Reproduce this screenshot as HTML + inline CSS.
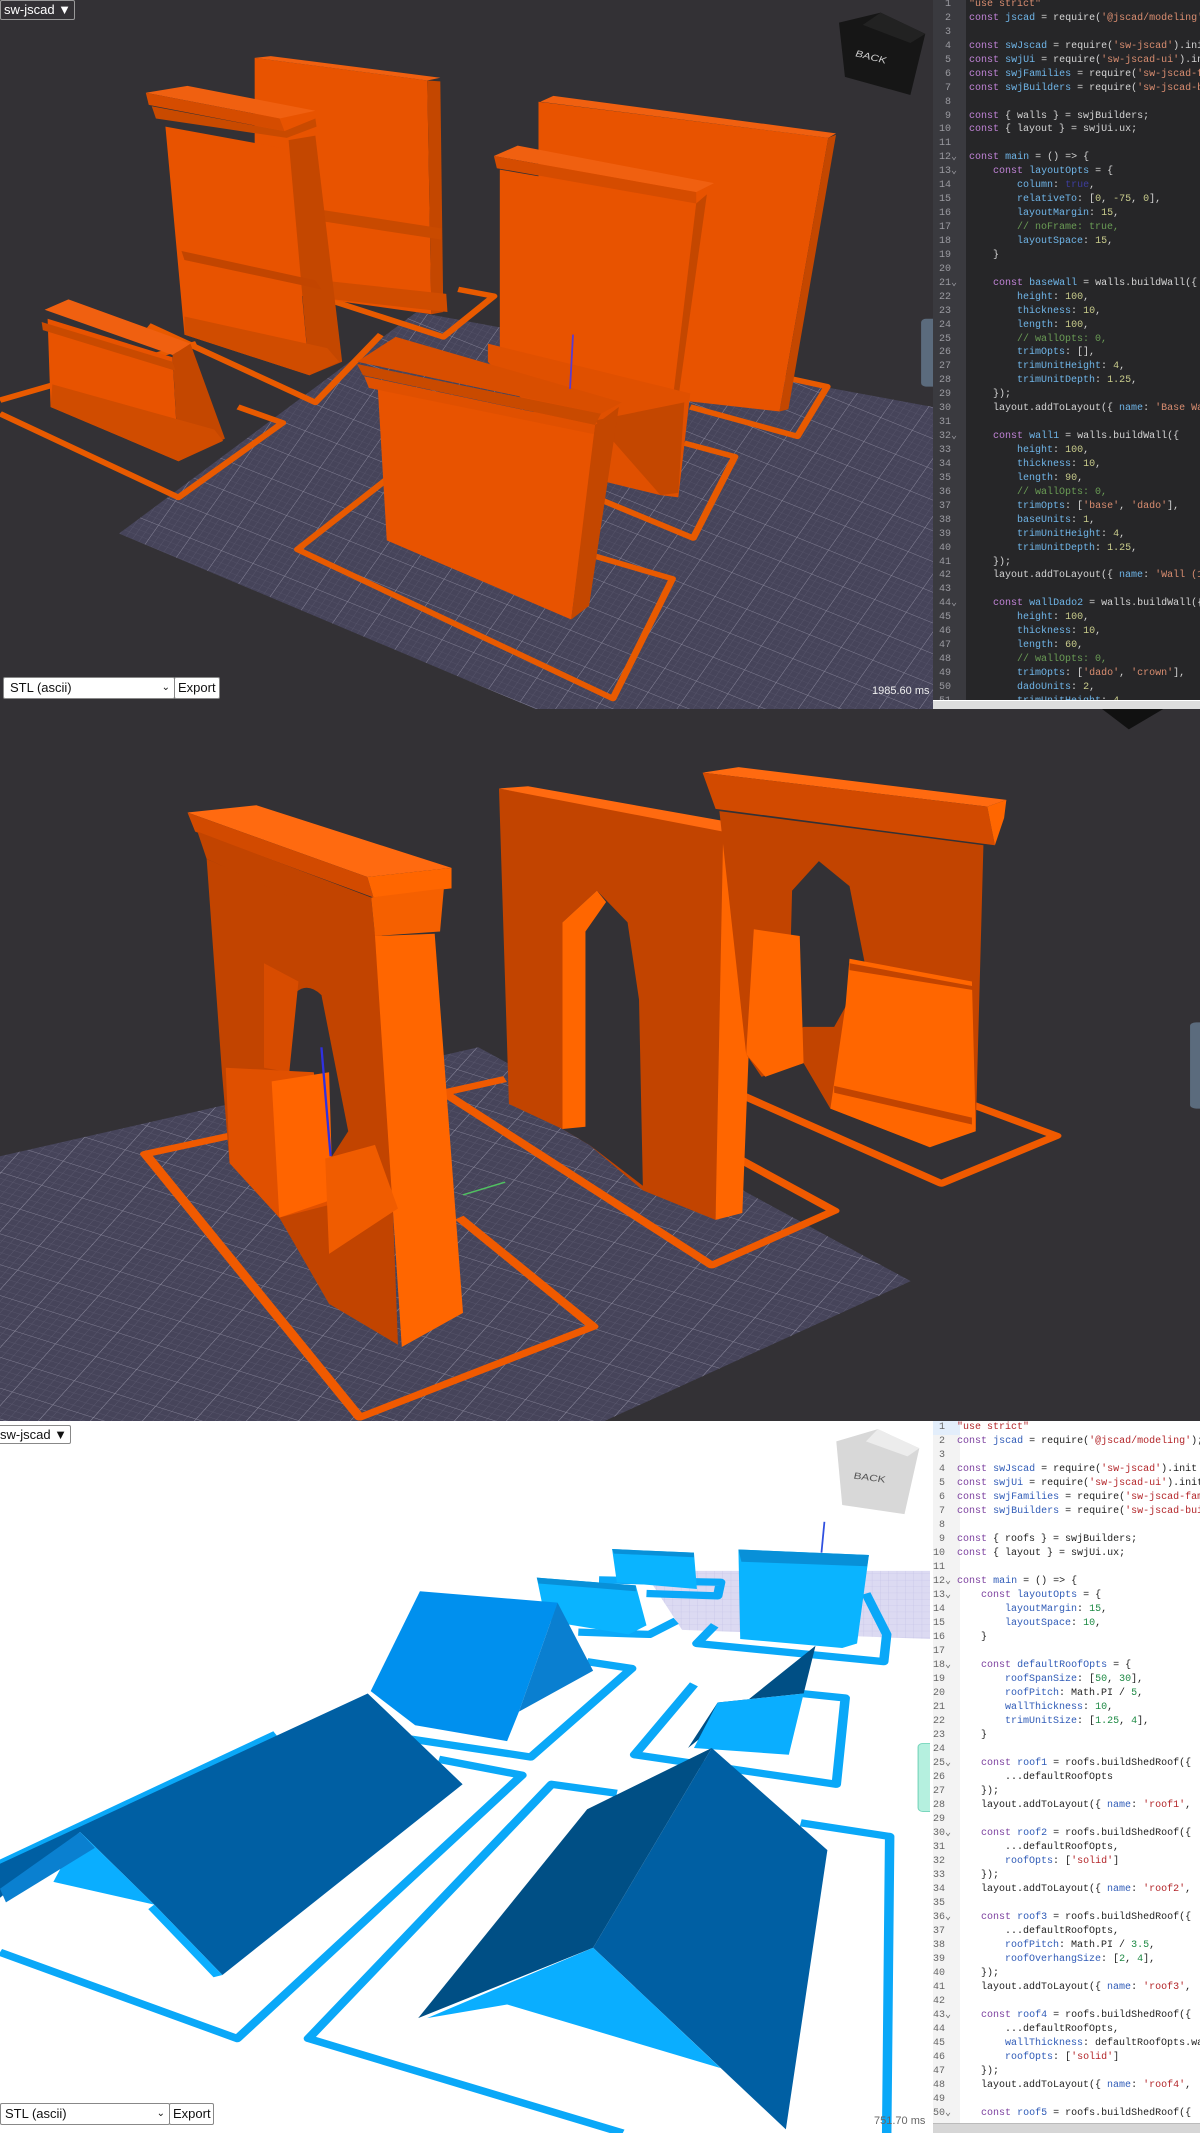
<!DOCTYPE html>
<html><head><meta charset="utf-8">
<style>
*{margin:0;padding:0;box-sizing:border-box}
html,body{width:1200px;height:2133px;overflow:hidden;background:#333135;font-family:"Liberation Sans",sans-serif}
.panel{position:absolute;left:0;overflow:hidden}
.svg{position:absolute;left:0;top:0}
.code{position:absolute;overflow:hidden;font-family:"Liberation Mono",monospace;font-size:10px}
.code .ln{position:absolute;left:0;top:0;width:100%;}
.dark{background:#262628;color:#d4d4d4}
.dark .g{position:absolute;left:0;top:0;bottom:0;width:33px;background:#3a3a3f}
.dark .num{color:#9a9aa0}
.dark .k{color:#c083d6}.dark .v{color:#6fb5e8}.dark .s{color:#d98d70}.dark .n{color:#c9cc8c}.dark .c{color:#6a9c55}.dark .t{color:#3d3d9c}
.light{background:#fff;color:#222}
.light .g{position:absolute;left:0;top:0;bottom:0;width:27px;background:#f3f3f3}
.light .num{color:#666}
.light .k{color:#7b3f9e}.light .v{color:#2f5bb7}.light .s{color:#b3262a}.light .n{color:#1d8a44}.light .c{color:#888}
.row{height:14px;line-height:14px;position:relative;white-space:pre;overflow:hidden}
.dark .row{height:13.94px;line-height:13.94px}
.btn{position:absolute;background:#fff;border:1px solid #888;border-radius:2px;font-size:12px;color:#111;line-height:16px;padding:0 3px;white-space:nowrap}
</style></head><body>

<!-- PANEL 1 -->
<div class="panel" style="top:0;width:1200px;height:709px;background:#333135">
<svg class="svg" width="933" height="709" viewBox="0 0 1568 1568" preserveAspectRatio="none">
<defs>
<pattern id="gr" width="12" height="12" patternUnits="userSpaceOnUse" patternTransform="rotate(28)">
<rect width="12" height="12" fill="#46445a"/><path d="M0 0H12M0 0V12" stroke="#5c5a70" stroke-width="1.2"/></pattern>
<pattern id="gr2" width="60" height="60" patternUnits="userSpaceOnUse" patternTransform="rotate(28)">
<path d="M0 0H60M0 0V60" stroke="#8e8ca0" stroke-width="1.5" fill="none"/></pattern>
</defs>
<polygon points="200,1180 700,690 1568,900 1568,1568 900,1568" fill="url(#gr)"/>
<polygon points="200,1180 700,690 1568,900 1568,1568 900,1568" fill="url(#gr2)"/>
<g fill="none" stroke="#e85a00" stroke-width="12" stroke-linejoin="round">
<polyline points="0,885 330,760"/><polyline points="0,915 300,1100 475,935 400,900"/>
<polyline points="250,720 530,890 640,740"/>
<polyline points="545,660 745,745 830,655 770,640"/>
<polyline points="650,1060 500,1215 1030,1545 1130,1280 1000,1230"/>
<polyline points="1000,1100 1165,1190 1235,1010 1150,980"/>
<polyline points="1160,900 1340,965 1390,855 1320,835"/>
</g>
<polygon points="428,128 718,178 725,695 428,640" fill="#e85300"/>
<polygon points="718,178 740,180 745,690 725,695" fill="#c44700"/>
<polygon points="428,128 455,124 740,172 718,178" fill="#f06010"/>
<polygon points="520,460 742,505 742,530 520,485" fill="#c94a00"/>
<polygon points="540,620 750,650 752,690 545,660" fill="#d04c00"/>
<polygon points="278,280 485,330 520,830 310,740" fill="#e85300"/>
<polygon points="485,310 530,300 575,800 520,830" fill="#c44700"/>
<polygon points="245,205 315,190 530,245 470,262" fill="#f06010"/>
<polygon points="245,205 470,262 478,290 250,232" fill="#d54c00"/>
<polygon points="255,235 478,290 530,262 532,280 482,305 262,262" fill="#c94a00"/>
<polygon points="305,555 530,620 540,640 310,575" fill="#c24500"/>
<polygon points="310,700 550,770 570,800 520,830 310,740" fill="#d04c00"/>
<polygon points="80,705 290,790 300,1020 85,900" fill="#e85300"/>
<polygon points="290,785 320,760 378,970 300,1020" fill="#c44700"/>
<polygon points="75,685 115,662 320,760 290,785" fill="#f06010"/>
<polygon points="70,712 290,800 295,820 72,730" fill="#c94a00"/>
<polygon points="88,850 360,950 375,975 300,1020 85,900" fill="#d04c00"/>
<polygon points="905,225 1392,305 1310,910 905,850" fill="#e85300"/>
<polygon points="1392,305 1405,298 1325,905 1310,910" fill="#c44700"/>
<polygon points="908,225 930,212 1405,295 1392,305" fill="#f06010"/>
<polygon points="840,375 1170,450 1130,890 840,800" fill="#e85300"/>
<polygon points="1170,450 1188,430 1140,880 1130,890" fill="#c44700"/>
<polygon points="830,345 870,322 1200,405 1170,425" fill="#f06010"/>
<polygon points="830,345 1170,425 1170,450 835,372" fill="#d54c00"/>
<polygon points="820,760 1160,870 1140,1100 1110,1095 1000,1060 820,800" fill="#e05000"/>
<polygon points="1000,930 1150,890 1140,1090 1110,1095" fill="#c44700"/>
<polygon points="635,860 1000,960 960,1370 650,1195" fill="#e85300"/>
<polygon points="1000,940 1040,900 990,1340 960,1370" fill="#c44700"/>
<polygon points="600,800 665,745 1045,890 1010,915" fill="#d94e00"/>
<polygon points="600,805 1010,915 1000,940 610,830" fill="#c94a00"/>
<polygon points="612,832 1000,940 998,960 620,858" fill="#e05000"/>
<line x1="963" y1="740" x2="958" y2="860" stroke="#5a3ad0" stroke-width="3"/>
<polygon points="1410,50 1480,28 1555,75 1530,210 1420,170" fill="#161616"/>
<polygon points="1480,28 1555,75 1530,95 1450,55" fill="#222"/>
<text x="1435" y="130" fill="#ccc" font-size="20" transform="rotate(18 1455 130)">BACK</text>
<rect x="1548" y="705" width="30" height="150" rx="8" fill="#5b6b7d"/>
</svg>
<div class="btn" style="left:0;top:0;height:20px;font-size:13px;line-height:18px;background:#333135;color:#fff;border-color:#999">sw-jscad ▼</div>
<div class="btn" style="left:3px;top:677px;width:172px;height:22px;line-height:20px;font-size:13px;padding-left:6px">STL (ascii)<span style="position:absolute;right:4px;font-size:10px">⌄</span></div>
<div class="btn" style="left:174px;top:677px;width:46px;height:22px;line-height:20px;font-size:13px">Export</div>
<div style="position:absolute;left:872px;top:685px;color:#eee;font-size:11px">1985.60 ms</div>

<div class="code dark" style="left:933px;top:0;width:267px;height:700px">
<div class="g"></div>
<div class="ln" style="top:-2px">
<div class="row"><span class="num">  1 </span>  <span class="s">"use strict"</span></div>
<div class="row"><span class="num">  2 </span>  <span class="k">const</span> <span class="v">jscad</span> = require(<span class="s">'@jscad/modeling'</span>);</div>
<div class="row"><span class="num">  3 </span></div>
<div class="row"><span class="num">  4 </span>  <span class="k">const</span> <span class="v">swJscad</span> = require(<span class="s">'sw-jscad'</span>).init</div>
<div class="row"><span class="num">  5 </span>  <span class="k">const</span> <span class="v">swjUi</span> = require(<span class="s">'sw-jscad-ui'</span>).init</div>
<div class="row"><span class="num">  6 </span>  <span class="k">const</span> <span class="v">swjFamilies</span> = require(<span class="s">'sw-jscad-families'</span></div>
<div class="row"><span class="num">  7 </span>  <span class="k">const</span> <span class="v">swjBuilders</span> = require(<span class="s">'sw-jscad-builders'</span></div>
<div class="row"><span class="num">  8 </span></div>
<div class="row"><span class="num">  9 </span>  <span class="k">const</span> { walls } = swjBuilders;</div>
<div class="row"><span class="num"> 10 </span>  <span class="k">const</span> { layout } = swjUi.ux;</div>
<div class="row"><span class="num"> 11 </span></div>
<div class="row"><span class="num"> 12⌄</span>  <span class="k">const</span> <span class="v">main</span> = () =&gt; {</div>
<div class="row"><span class="num"> 13⌄</span>      <span class="k">const</span> <span class="v">layoutOpts</span> = {</div>
<div class="row"><span class="num"> 14 </span>          <span class="v">column</span>: <span class="t">true</span>,</div>
<div class="row"><span class="num"> 15 </span>          <span class="v">relativeTo</span>: [<span class="n">0</span>, <span class="n">-75</span>, <span class="n">0</span>],</div>
<div class="row"><span class="num"> 16 </span>          <span class="v">layoutMargin</span>: <span class="n">15</span>,</div>
<div class="row"><span class="num"> 17 </span>          <span class="c">// noFrame: true,</span></div>
<div class="row"><span class="num"> 18 </span>          <span class="v">layoutSpace</span>: <span class="n">15</span>,</div>
<div class="row"><span class="num"> 19 </span>      }</div>
<div class="row"><span class="num"> 20 </span></div>
<div class="row"><span class="num"> 21⌄</span>      <span class="k">const</span> <span class="v">baseWall</span> = walls.buildWall({</div>
<div class="row"><span class="num"> 22 </span>          <span class="v">height</span>: <span class="n">100</span>,</div>
<div class="row"><span class="num"> 23 </span>          <span class="v">thickness</span>: <span class="n">10</span>,</div>
<div class="row"><span class="num"> 24 </span>          <span class="v">length</span>: <span class="n">100</span>,</div>
<div class="row"><span class="num"> 25 </span>          <span class="c">// wallOpts: 0,</span></div>
<div class="row"><span class="num"> 26 </span>          <span class="v">trimOpts</span>: [],</div>
<div class="row"><span class="num"> 27 </span>          <span class="v">trimUnitHeight</span>: <span class="n">4</span>,</div>
<div class="row"><span class="num"> 28 </span>          <span class="v">trimUnitDepth</span>: <span class="n">1.25</span>,</div>
<div class="row"><span class="num"> 29 </span>      });</div>
<div class="row"><span class="num"> 30 </span>      layout.addToLayout({ <span class="v">name</span>: <span class="s">'Base Wall'</span></div>
<div class="row"><span class="num"> 31 </span></div>
<div class="row"><span class="num"> 32⌄</span>      <span class="k">const</span> <span class="v">wall1</span> = walls.buildWall({</div>
<div class="row"><span class="num"> 33 </span>          <span class="v">height</span>: <span class="n">100</span>,</div>
<div class="row"><span class="num"> 34 </span>          <span class="v">thickness</span>: <span class="n">10</span>,</div>
<div class="row"><span class="num"> 35 </span>          <span class="v">length</span>: <span class="n">90</span>,</div>
<div class="row"><span class="num"> 36 </span>          <span class="c">// wallOpts: 0,</span></div>
<div class="row"><span class="num"> 37 </span>          <span class="v">trimOpts</span>: [<span class="s">'base'</span>, <span class="s">'dado'</span>],</div>
<div class="row"><span class="num"> 38 </span>          <span class="v">baseUnits</span>: <span class="n">1</span>,</div>
<div class="row"><span class="num"> 39 </span>          <span class="v">trimUnitHeight</span>: <span class="n">4</span>,</div>
<div class="row"><span class="num"> 40 </span>          <span class="v">trimUnitDepth</span>: <span class="n">1.25</span>,</div>
<div class="row"><span class="num"> 41 </span>      });</div>
<div class="row"><span class="num"> 42 </span>      layout.addToLayout({ <span class="v">name</span>: <span class="s">'Wall (1)'</span></div>
<div class="row"><span class="num"> 43 </span></div>
<div class="row"><span class="num"> 44⌄</span>      <span class="k">const</span> <span class="v">wallDado2</span> = walls.buildWall({</div>
<div class="row"><span class="num"> 45 </span>          <span class="v">height</span>: <span class="n">100</span>,</div>
<div class="row"><span class="num"> 46 </span>          <span class="v">thickness</span>: <span class="n">10</span>,</div>
<div class="row"><span class="num"> 47 </span>          <span class="v">length</span>: <span class="n">60</span>,</div>
<div class="row"><span class="num"> 48 </span>          <span class="c">// wallOpts: 0,</span></div>
<div class="row"><span class="num"> 49 </span>          <span class="v">trimOpts</span>: [<span class="s">'dado'</span>, <span class="s">'crown'</span>],</div>
<div class="row"><span class="num"> 50 </span>          <span class="v">dadoUnits</span>: <span class="n">2</span>,</div>
<div class="row"><span class="num"> 51 </span>          <span class="v">trimUnitHeight</span>: <span class="n">4</span>,</div>
</div>
</div>
<div style="position:absolute;left:933px;top:700px;width:267px;height:9px;background:#ddd;border-top:1px solid #fff"></div>
</div>

<!-- PANEL 2 -->
<div class="panel" style="top:709px;width:1200px;height:712px;background:#333135">
<svg class="svg" width="1200" height="712" viewBox="0 0 1568 1568" preserveAspectRatio="none">
<polygon points="0,985 625,745 1190,1260 790,1568 0,1568" fill="url(#gr)"/>
<polygon points="0,985 625,745 1190,1260 790,1568 0,1568" fill="url(#gr2)"/>
<polygon points="1440,0 1520,0 1475,45" fill="#111"/>
<g fill="none" stroke="#f05a00" stroke-width="14" stroke-linejoin="round">
<polyline points="300,940 190,980 470,1560 775,1360 600,1120"/>
<polyline points="660,815 580,845 930,1225 1090,1105 780,820"/>
<polyline points="880,725 815,735 1230,1045 1380,940 1045,730"/>
</g>
<path d="M270,330 L500,500 L520,1400 L430,1310 L365,1120 L300,1000 L290,800 Z" fill="#c24400"/>
<path d="M370,800 L375,650 Q395,590 420,630 L455,930 L432,990 L395,980 Z" fill="#333135"/>
<polygon points="345,560 390,600 378,800 345,790" fill="#d84c00"/>
<polygon points="295,790 410,800 435,1090 365,1120 300,1000" fill="#e05000"/>
<polygon points="355,820 430,800 435,1080 365,1120" fill="#ff6400"/>
<polygon points="490,500 568,495 605,1330 525,1405" fill="#ff6600"/>
<polygon points="425,990 490,960 520,1100 430,1200" fill="#f05c00"/>
<polygon points="245,228 335,212 590,350 480,370" fill="#ff6a10"/>
<polygon points="245,228 480,370 488,415 255,270" fill="#d24a00"/>
<polygon points="480,370 590,350 590,395 488,415" fill="#ff6600"/>
<polygon points="258,270 485,415 490,500 270,330" fill="#c24400"/>
<polygon points="485,415 580,395 575,490 490,500" fill="#f56000"/>
<polygon points="652,175 950,265 935,1125 840,1060 770,960 735,925 665,870" fill="#c24400"/>
<polygon points="735,925 735,470 780,400 820,470 835,640 840,1050 770,960" fill="#333135"/>
<polygon points="735,470 780,400 792,425 765,490 765,920 735,925" fill="#ff6600"/>
<polygon points="945,270 990,260 970,1110 935,1125" fill="#ff6600"/>
<polygon points="652,175 690,170 990,260 945,270" fill="#ff6a10"/>
<polygon points="940,225 1285,300 1275,925 1215,965 1085,880 1050,780 995,810 975,760" fill="#c24400"/>
<polygon points="1030,720 1035,400 1070,335 1110,390 1130,560 1110,640 1090,700 1050,700" fill="#333135"/>
<polygon points="985,485 1045,500 1050,780 1000,810 975,760" fill="#ff6600"/>
<polygon points="1110,550 1270,600 1275,930 1215,965 1085,880 1105,650" fill="#ff6600"/>
<polygon points="1110,560 1270,610 1275,620 1110,575" fill="#c24400"/>
<polygon points="1090,830 1270,900 1270,915 1090,845" fill="#c24400"/>
<polygon points="918,140 965,128 1315,200 1290,215" fill="#ff6a10"/>
<polygon points="918,140 1290,215 1300,300 935,220" fill="#d24a00"/>
<polygon points="1290,215 1315,200 1312,240 1300,300" fill="#ff6600"/>
<line x1="420" y1="745" x2="432" y2="985" stroke="#3030e0" stroke-width="3"/>
<line x1="605" y1="1070" x2="660" y2="1042" stroke="#50c060" stroke-width="3"/>
<rect x="1555" y="690" width="30" height="190" rx="8" fill="#5b6b7d"/>
</svg>
</div>

<!-- PANEL 3 -->
<div class="panel" style="top:1421px;width:1200px;height:712px;background:#fff">
<svg class="svg" width="930" height="712" viewBox="0 0 1568 1568" preserveAspectRatio="none">
<defs><pattern id="lg" width="14" height="14" patternUnits="userSpaceOnUse"><rect width="14" height="14" fill="#dcdaf2"/><path d="M0 0H14M0 0V14" stroke="#c2c0e6" stroke-width="1"/></pattern></defs>
<polygon points="1085,330 1568,330 1568,480 1150,460" fill="url(#lg)"/>
<g fill="none" stroke="#0aa8f8" stroke-width="16" stroke-linejoin="round">
<polyline points="0,1170 400,1360 880,780 740,745"/>
<polyline points="0,975 465,690"/>
<polyline points="690,700 895,740 1065,545 990,530"/>
<polyline points="975,465 1095,470 1140,440"/>
<polyline points="1010,350 1215,355 1210,385 1090,380"/>
<polyline points="1205,450 1175,490 1490,530 1495,470 1460,380"/>
<polyline points="1170,580 1070,735 1410,800 1425,610 1350,600"/>
<polyline points="1040,820 930,800 520,1360 1050,1568"/>
<polyline points="1350,885 1500,915 1495,1568"/>
</g>
<polygon points="1032,282 1170,290 1175,370 1040,355" fill="#0ab4ff"/>
<polygon points="1032,282 1170,290 1170,300 1035,292" fill="#0890d8"/>
<polygon points="905,345 1072,362 1090,450 1060,470 920,440" fill="#0ab4ff"/>
<polygon points="905,345 1072,362 1072,375 908,358" fill="#0890d8"/>
<polygon points="1245,283 1465,295 1445,490 1420,500 1248,480" fill="#0ab4ff"/>
<polygon points="1245,283 1465,295 1462,320 1250,310" fill="#0890d8"/>
<polygon points="708,375 940,400 875,640 855,705 700,670 625,595" fill="#0090ee"/>
<polygon points="940,400 1000,550 875,640" fill="#0a7fd0"/>
<polygon points="0,975 620,600 780,800 375,1220 260,1065 135,905 0,1050" fill="#005fa3"/>
<polygon points="135,905 260,1065 90,1015" fill="#0aaeff"/>
<polygon points="0,1030 135,905 160,940 10,1060" fill="#0a80d0"/>
<polygon points="260,1065 375,1220 360,1225 250,1075" fill="#0aaeff"/>
<polygon points="1160,720 1375,495 1355,600 1210,620" fill="#004f85"/>
<polygon points="1210,620 1355,600 1330,735 1170,720" fill="#0aaeff"/>
<polygon points="990,855 1200,720 1000,1160 705,1315" fill="#004f85"/>
<polygon points="1200,720 1395,945 1325,1560 1000,1160" fill="#005fa3"/>
<polygon points="720,1315 1000,1160 1215,1425 855,1285" fill="#0aaeff"/>
<line x1="1390" y1="222" x2="1385" y2="290" stroke="#3050e0" stroke-width="3"/>
<polygon points="1410,45 1480,18 1550,60 1525,205 1420,185" fill="#d8d8d8"/>
<polygon points="1480,18 1550,60 1530,78 1460,45" fill="#ececec"/>
<text x="1438" y="130" fill="#555" font-size="20" transform="rotate(10 1458 130)">BACK</text>
<rect x="1548" y="710" width="30" height="150" rx="8" fill="#b5f0df" stroke="#7ad6bd" stroke-width="2"/>
</svg>
<div class="btn" style="left:-4px;top:4px;height:19px;font-size:13px;line-height:17px">sw-jscad ▼</div>
<div class="btn" style="left:0;top:682px;width:170px;height:22px;line-height:20px;font-size:13px;padding-left:4px">STL (ascii)<span style="position:absolute;right:4px;font-size:10px">⌄</span></div>
<div class="btn" style="left:169px;top:682px;width:45px;height:22px;line-height:20px;font-size:13px">Export</div>
<div style="position:absolute;left:874px;top:694px;color:#666;font-size:11px">751.70 ms</div>

<div class="code light" style="left:933px;top:0;width:267px;height:702px">
<div class="g"></div>
<div style="position:absolute;left:0;top:0;width:27px;height:14px;background:#e3eefb"></div>
<div class="ln" style="top:0">
<div class="row"><span class="num"> 1 </span> <span class="s">"use strict"</span></div>
<div class="row"><span class="num"> 2 </span> <span class="k">const</span> <span class="v">jscad</span> = require(<span class="s">'@jscad/modeling'</span>);</div>
<div class="row"><span class="num"> 3 </span></div>
<div class="row"><span class="num"> 4 </span> <span class="k">const</span> <span class="v">swJscad</span> = require(<span class="s">'sw-jscad'</span>).init</div>
<div class="row"><span class="num"> 5 </span> <span class="k">const</span> <span class="v">swjUi</span> = require(<span class="s">'sw-jscad-ui'</span>).init</div>
<div class="row"><span class="num"> 6 </span> <span class="k">const</span> <span class="v">swjFamilies</span> = require(<span class="s">'sw-jscad-families'</span></div>
<div class="row"><span class="num"> 7 </span> <span class="k">const</span> <span class="v">swjBuilders</span> = require(<span class="s">'sw-jscad-builders'</span></div>
<div class="row"><span class="num"> 8 </span></div>
<div class="row"><span class="num"> 9 </span> <span class="k">const</span> { roofs } = swjBuilders;</div>
<div class="row"><span class="num">10 </span> <span class="k">const</span> { layout } = swjUi.ux;</div>
<div class="row"><span class="num">11 </span></div>
<div class="row"><span class="num">12⌄</span> <span class="k">const</span> <span class="v">main</span> = () =&gt; {</div>
<div class="row"><span class="num">13⌄</span>     <span class="k">const</span> <span class="v">layoutOpts</span> = {</div>
<div class="row"><span class="num">14 </span>         <span class="v">layoutMargin</span>: <span class="n">15</span>,</div>
<div class="row"><span class="num">15 </span>         <span class="v">layoutSpace</span>: <span class="n">10</span>,</div>
<div class="row"><span class="num">16 </span>     }</div>
<div class="row"><span class="num">17 </span></div>
<div class="row"><span class="num">18⌄</span>     <span class="k">const</span> <span class="v">defaultRoofOpts</span> = {</div>
<div class="row"><span class="num">19 </span>         <span class="v">roofSpanSize</span>: [<span class="n">50</span>, <span class="n">30</span>],</div>
<div class="row"><span class="num">20 </span>         <span class="v">roofPitch</span>: Math.PI / <span class="n">5</span>,</div>
<div class="row"><span class="num">21 </span>         <span class="v">wallThickness</span>: <span class="n">10</span>,</div>
<div class="row"><span class="num">22 </span>         <span class="v">trimUnitSize</span>: [<span class="n">1.25</span>, <span class="n">4</span>],</div>
<div class="row"><span class="num">23 </span>     }</div>
<div class="row"><span class="num">24 </span></div>
<div class="row"><span class="num">25⌄</span>     <span class="k">const</span> <span class="v">roof1</span> = roofs.buildShedRoof({</div>
<div class="row"><span class="num">26 </span>         ...defaultRoofOpts</div>
<div class="row"><span class="num">27 </span>     });</div>
<div class="row"><span class="num">28 </span>     layout.addToLayout({ <span class="v">name</span>: <span class="s">'roof1'</span>, </div>
<div class="row"><span class="num">29 </span></div>
<div class="row"><span class="num">30⌄</span>     <span class="k">const</span> <span class="v">roof2</span> = roofs.buildShedRoof({</div>
<div class="row"><span class="num">31 </span>         ...defaultRoofOpts,</div>
<div class="row"><span class="num">32 </span>         <span class="v">roofOpts</span>: [<span class="s">'solid'</span>]</div>
<div class="row"><span class="num">33 </span>     });</div>
<div class="row"><span class="num">34 </span>     layout.addToLayout({ <span class="v">name</span>: <span class="s">'roof2'</span>, </div>
<div class="row"><span class="num">35 </span></div>
<div class="row"><span class="num">36⌄</span>     <span class="k">const</span> <span class="v">roof3</span> = roofs.buildShedRoof({</div>
<div class="row"><span class="num">37 </span>         ...defaultRoofOpts,</div>
<div class="row"><span class="num">38 </span>         <span class="v">roofPitch</span>: Math.PI / <span class="n">3.5</span>,</div>
<div class="row"><span class="num">39 </span>         <span class="v">roofOverhangSize</span>: [<span class="n">2</span>, <span class="n">4</span>],</div>
<div class="row"><span class="num">40 </span>     });</div>
<div class="row"><span class="num">41 </span>     layout.addToLayout({ <span class="v">name</span>: <span class="s">'roof3'</span>, </div>
<div class="row"><span class="num">42 </span></div>
<div class="row"><span class="num">43⌄</span>     <span class="k">const</span> <span class="v">roof4</span> = roofs.buildShedRoof({</div>
<div class="row"><span class="num">44 </span>         ...defaultRoofOpts,</div>
<div class="row"><span class="num">45 </span>         <span class="v">wallThickness</span>: defaultRoofOpts.wallThickness</div>
<div class="row"><span class="num">46 </span>         <span class="v">roofOpts</span>: [<span class="s">'solid'</span>]</div>
<div class="row"><span class="num">47 </span>     });</div>
<div class="row"><span class="num">48 </span>     layout.addToLayout({ <span class="v">name</span>: <span class="s">'roof4'</span>, </div>
<div class="row"><span class="num">49 </span></div>
<div class="row"><span class="num">50⌄</span>     <span class="k">const</span> <span class="v">roof5</span> = roofs.buildShedRoof({</div>
</div>
</div>
<div style="position:absolute;left:933px;top:702px;width:267px;height:10px;background:#d6d6d6;border-top:1px solid #bbb"></div>
</div>
</body></html>
